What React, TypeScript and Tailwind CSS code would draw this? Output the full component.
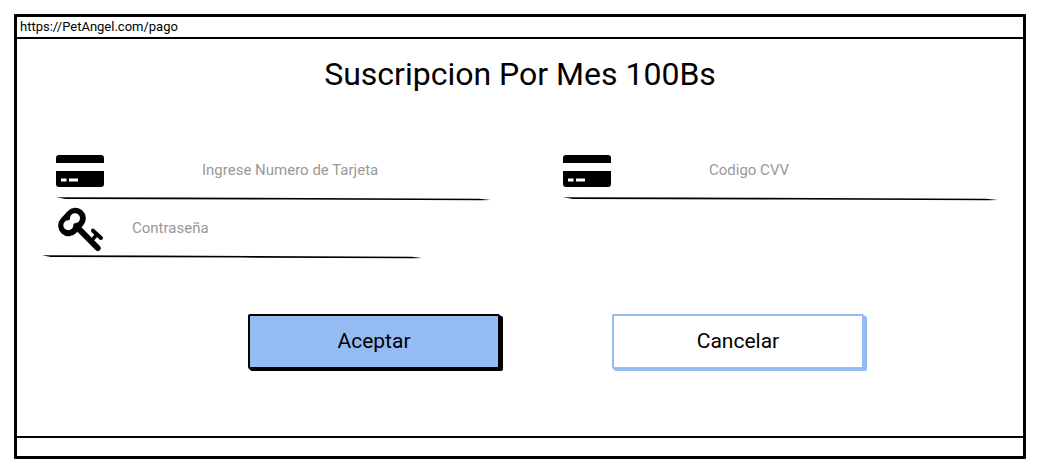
import type { ReactNode } from "react";

function CardIcon() {
  return (
    <svg aria-hidden="true" viewBox="0 0 48 32" className="h-8 w-12 shrink-0">
      <path d="M3 0H45Q48 0 48 3V8H0V3Q0 0 3 0Z" />
      <path
        fillRule="evenodd"
        d="M0 16H48V29Q48 32 45 32H3Q0 32 0 29ZM5 23.5V26.5H10.5V23.5ZM13 23.5V26.5H22V23.5Z"
      />
    </svg>
  );
}

function KeyIcon() {
  return (
    <svg
      aria-hidden="true"
      viewBox="12 9 144 144"
      fill="none"
      strokeLinecap="round"
      className="size-12 shrink-0"
    >
      <path d="M50 71L70 49" stroke="black" strokeWidth="63" />
      <circle cx="49" cy="70" r="15" fill="white" />
      <circle cx="69" cy="49" r="15" fill="white" />
      <path d="M49 70L69 49" stroke="white" strokeWidth="18" />
      <path d="M82 82L137 138" stroke="black" strokeWidth="18" />
      <path d="M117 118L134 98" stroke="black" strokeWidth="11" />
      <path d="M123 86L147 108" stroke="black" strokeWidth="12" />
    </svg>
  );
}

function Underline() {
  return (
    <svg
      aria-hidden="true"
      viewBox="0 0 435 6"
      preserveAspectRatio="none"
      className="block h-1.5 w-full"
    >
      <path d="M0 1.3L120 1.5L423 2.7L435 3.9L425 4.2L230 3.6L10 3Z" />
    </svg>
  );
}

type FieldProps = {
  id: string;
  label: string;
  type?: string;
  icon: ReactNode;
  className?: string;
  inputClassName: string;
};

function Field({ id, label, type = "text", icon, className = "", inputClassName }: FieldProps) {
  return (
    <div className={className}>
      <div className="flex h-[50px] items-center">
        <label htmlFor={id} aria-label={label} className="shrink-0">
          {icon}
        </label>
        <input
          id={id}
          type={type}
          placeholder={label}
          className={`h-12 w-full min-w-0 bg-transparent pb-0.5 text-[15px] outline-none placeholder:text-[#999999] ${inputClassName}`}
        />
      </div>
      <Underline />
    </div>
  );
}

export default function App() {
  return (
    <div className="bg-white py-[14px] pr-[15px] pl-[14px] font-['Roboto',sans-serif] text-black">
      <div className="rounded-[1px] border-[3px] border-black">
        <header className="border-b-2 border-black pl-[3px] text-[13px] leading-5">
          https://PetAngel.com/pago
        </header>
        <main className="pt-[17px] pb-[67px]">
          <h1 className="text-center text-[32px] leading-9">Suscripcion Por Mes 100Bs</h1>
          <form onSubmit={(e) => e.preventDefault()}>
            <div className="mt-[54px] grid grid-cols-2 gap-[72px] pr-[25px] pl-[39px]">
              <Field
                id="tarjeta"
                label="Ingrese Numero de Tarjeta"
                icon={<CardIcon />}
                inputClassName="pl-[98px]"
              />
              <Field
                id="cvv"
                label="Codigo CVV"
                icon={<CardIcon />}
                inputClassName="pl-[98px]"
              />
            </div>
            <div className="mt-0.5 pl-[25px]">
              <Field
                id="clave"
                label="Contraseña"
                type="password"
                icon={<div className="pl-[14px]"><KeyIcon /></div>}
                className="w-[380px] max-w-full"
                inputClassName="pl-7"
              />
            </div>
            <div className="mt-[54px] flex justify-center gap-28 pl-[72px]">
              <button
                type="submit"
                className="h-[55px] w-[252px] rounded-[2px] border-2 border-black bg-[#94bbf2] text-[21px] shadow-[1px_1px_0_#000000,2px_2px_0_#000000,3px_2px_0_#000000]"
              >
                Aceptar
              </button>
              <button
                type="button"
                className="h-[55px] w-[252px] rounded-[2px] border-2 border-[#94bbf2] bg-white text-[21px] shadow-[1px_1px_0_#94bbf2,2px_2px_0_#94bbf2,3px_2px_0_#94bbf2]"
              >
                Cancelar
              </button>
            </div>
          </form>
        </main>
        <footer className="h-5 border-t-2 border-black" />
      </div>
    </div>
  );
}
